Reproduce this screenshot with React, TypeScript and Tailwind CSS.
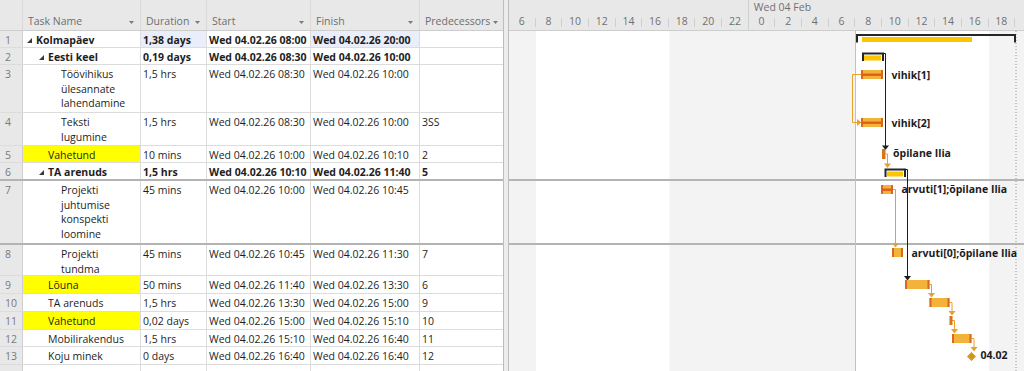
import React from "react";

type Row = {
  n: number | "";
  h: string;
  level: 0 | 1 | 2;
  summary?: boolean;
  name: string[];
  dur: string;
  start: string;
  finish: string;
  pred: string;
  hl?: boolean;
  blue?: boolean;
  thick?: boolean;
};

const D = "Wed 04.02.26 ";

const rows: Row[] = [
  { n: 1, h: "h-[17px]", level: 0, summary: true, name: ["Kolmapäev"], dur: "1,38 days", start: D + "08:00", finish: D + "20:00", pred: "", blue: true },
  { n: 2, h: "h-[17px]", level: 1, summary: true, name: ["Eesti keel"], dur: "0,19 days", start: D + "08:30", finish: D + "10:00", pred: "" },
  { n: 3, h: "h-[48px]", level: 2, name: ["Töövihikus", "ülesannate", "lahendamine"], dur: "1,5 hrs", start: D + "08:30", finish: D + "10:00", pred: "" },
  { n: 4, h: "h-[33px]", level: 2, name: ["Teksti", "lugumine"], dur: "1,5 hrs", start: D + "08:30", finish: D + "10:00", pred: "3SS" },
  { n: 5, h: "h-[17px]", level: 1, hl: true, name: ["Vahetund"], dur: "10 mins", start: D + "10:00", finish: D + "10:10", pred: "2" },
  { n: 6, h: "h-[18px]", level: 1, summary: true, thick: true, name: ["TA arenuds"], dur: "1,5 hrs", start: D + "10:10", finish: D + "11:40", pred: "5" },
  { n: 7, h: "h-[64px]", level: 2, thick: true, name: ["Projekti", "juhtumise", "konspekti", "loomine"], dur: "45 mins", start: D + "10:00", finish: D + "10:45", pred: "" },
  { n: 8, h: "h-[31px]", level: 2, name: ["Projekti", "tundma"], dur: "45 mins", start: D + "10:45", finish: D + "11:30", pred: "7" },
  { n: 9, h: "h-[18px]", level: 1, hl: true, name: ["Lõuna"], dur: "50 mins", start: D + "11:40", finish: D + "13:30", pred: "6" },
  { n: 10, h: "h-[18px]", level: 1, name: ["TA arenuds"], dur: "1,5 hrs", start: D + "13:30", finish: D + "15:00", pred: "9" },
  { n: 11, h: "h-[18px]", level: 1, hl: true, name: ["Vahetund"], dur: "0,02 days", start: D + "15:00", finish: D + "15:10", pred: "10" },
  { n: 12, h: "h-[17px]", level: 1, name: ["Mobilirakendus"], dur: "1,5 hrs", start: D + "15:10", finish: D + "16:40", pred: "11" },
  { n: 13, h: "h-[18px]", level: 1, name: ["Koju minek"], dur: "0 days", start: D + "16:40", finish: D + "16:40", pred: "12" },
  { n: "", h: "h-[18px]", level: 1, name: [], dur: "", start: "", finish: "", pred: "" },
];

const ticks = ["6", "8", "10", "12", "14", "16", "18", "20", "22", "0", "2", "4", "6", "8", "10", "12", "14", "16", "18", ""];

const Caret = () => (
  <svg width="5" height="3" className="mb-[4px] shrink-0">
    <polygon points="0,0 5,0 2.5,3" fill="#7a7a7a" />
  </svg>
);

const Outline = () => (
  <span className="flex h-[14.5px] items-center">
    <svg width="5" height="5">
      <polygon points="5,0 5,5 0,5" fill="#3a3a3a" />
    </svg>
  </span>
);

function HeadCell({ label, w }: { label: string; w: string }) {
  return (
    <div className={`${w} flex shrink-0 items-end justify-between border-r border-[#d9d9d9] pb-[2px] pl-[5px] pr-[6px]`}>
      <span>{label}</span>
      <Caret />
    </div>
  );
}

function TableRow({ r }: { r: Row }) {
  const indent = r.summary
    ? r.level === 0
      ? "pl-[4px]"
      : "pl-[16px]"
    : r.level === 2
      ? "pl-[38px]"
      : "pl-[25px]";
  const line = r.thick ? "border-b-2 border-[#b4b4b4]" : "border-b border-[#dcdcdc]";
  return (
    <div className={`flex shrink-0 ${r.h} ${line} ${r.summary ? "font-bold" : ""}`}>
      <div className="w-[23px] shrink-0 border-r border-[#cfcfcf] bg-[#e8e8e8] pl-[5px] pt-[2px] font-normal text-[#7a7a7a]">
        {r.n}
      </div>
      <div className={`w-[118px] shrink-0 border-r border-[#dcdcdc] pt-[2px] ${indent} ${r.hl ? "bg-[#ffff00]" : ""}`}>
        {r.summary ? (
          <div className="flex">
            <Outline />
            <span className="ml-[4px] whitespace-nowrap">{r.name[0]}</span>
          </div>
        ) : (
          r.name.map((t, i) => (
            <div key={i} className="whitespace-nowrap">
              {t}
            </div>
          ))
        )}
      </div>
      <div className={`w-[66px] shrink-0 border-r border-[#dcdcdc] pl-[2px] pt-[2px] whitespace-nowrap ${r.blue ? "bg-[#e9eefa]" : ""}`}>
        {r.dur}
      </div>
      <div className="w-[104px] shrink-0 border-r border-[#dcdcdc] pl-[2px] pt-[2px] whitespace-nowrap">{r.start}</div>
      <div className={`w-[109px] shrink-0 border-r border-[#dcdcdc] pl-[2px] pt-[2px] whitespace-nowrap ${r.blue ? "bg-[#e9eefa]" : ""}`}>
        {r.finish}
      </div>
      <div className="w-[83px] shrink-0 pl-[2px] pt-[2px] whitespace-nowrap">{r.pred}</div>
    </div>
  );
}

// bars drawn in page coordinates, the group is shifted to the chart origin
function Bar({ x1, x2, y, stripe }: { x1: number; x2: number; y: number; stripe?: boolean }) {
  return (
    <g>
      <rect x={x1} y={y} width={x2 - x1} height={9} fill="#f3b23a" />
      <rect x={x1} y={y} width={2} height={9} fill="#d9691c" />
      <rect x={x2 - 2} y={y} width={2} height={9} fill="#d9691c" />
      {stripe && <rect x={x1} y={y + 3.5} width={x2 - x1} height={2.5} fill="#e2601c" />}
    </g>
  );
}

function Summary({ x1, x2, y, y1, y2 }: { x1: number; x2: number; y: number; y1: number; y2: number }) {
  return (
    <g>
      <rect x={y1} y={y + 2} width={y2 - y1} height={5} fill="#fdc400" />
      <path d={`M${x1},${y + 7.5} V${y} H${x2} V${y + 7.5}`} stroke="#262626" strokeWidth={2} fill="none" />
    </g>
  );
}

function Link({ d, tx, ty, color }: { d: string; tx: number; ty: number; color: string }) {
  return (
    <g>
      <path d={d} stroke={color} strokeWidth={1} fill="none" />
      <polygon points={`${tx - 3.5},${ty - 4.5} ${tx + 3.5},${ty - 4.5} ${tx},${ty}`} fill={color} />
    </g>
  );
}

const OR = "#e6a12c";

function Chart() {
  return (
    <svg width={515} height={340} className="block">
      <g transform="translate(-509,-31)">
        <rect x={509} y={31} width={515} height={340} fill="#ffffff" />
        <rect x={509} y={31} width={27} height={340} fill="#f3f3f3" />
        <rect x={669.4} y={31} width={186.6} height={340} fill="#f3f3f3" />
        <rect x={989.3} y={31} width={35} height={340} fill="#f3f3f3" />
        <rect x={509} y={179} width={515} height={2} fill="#b4b4b4" />
        <rect x={509} y={243} width={515} height={2} fill="#b4b4b4" />
        <line x1={855.5} y1={31} x2={855.5} y2={371} stroke="#a6d6a0" strokeWidth={1} />
        <line x1={1016} y1={31} x2={1016} y2={371} stroke="#9a9a9a" strokeWidth={1} strokeDasharray="1 2" />

        <Summary x1={857} x2={1015} y={35} y1={862} y2={972} />
        <Summary x1={863} x2={883} y={53.5} y1={864} y2={881} />
        <Summary x1={885.5} x2={905} y={169.5} y1={887} y2={903} />

        <Link d="M883,53.5 H885.5 V146" tx={885.5} ty={150} color="#1e1e1e" />
        <Link d="M905,169.5 H907.5 V276" tx={907.5} ty={280.5} color="#1e1e1e" />

        <path d="M861,74.5 H852.5 V122.5 H857" stroke={OR} strokeWidth={1} fill="none" />
        <polygon points="857,119 857,126 861.5,122.5" fill={OR} />
        <Link d="M885.5,154 H887.5 V164" tx={887.5} ty={168} color={OR} />
        <Link d="M893,189.5 H895.5 V243" tx={895.5} ty={247.5} color={OR} />
        <Link d="M929.5,284.5 H931.5 V293.5" tx={931.5} ty={297.5} color={OR} />
        <Link d="M949.5,302.5 H952 V311.5" tx={952} ty={315.5} color={OR} />
        <Link d="M952,320.5 H954.5 V329.5" tx={954.5} ty={333.5} color={OR} />
        <Link d="M971.5,338.5 H974 V347.5" tx={974} ty={351.5} color={OR} />

        <Bar x1={861} x2={883} y={70} stripe />
        <Bar x1={861} x2={883} y={118} stripe />
        <rect x={882} y={149} width={3.5} height={10} fill="#d9731f" />
        <Bar x1={881} x2={893} y={185} stripe />
        <Bar x1={892} x2={903} y={248} />
        <Bar x1={905} x2={929.5} y={280} />
        <Bar x1={929.5} x2={949.5} y={298} />
        <rect x={949.5} y={316} width={3} height={9} fill="#d9731f" />
        <Bar x1={952} x2={971.5} y={334} />
        <polygon points="971.5,352 976,356.5 971.5,361 967,356.5" fill="#d3961b" />

        <g className="font-['Open_Sans',sans-serif] text-[10.5px] font-bold" fill="#1c1c1c">
          <text x={891.5} y={74.5} dominantBaseline="central">vihik[1]</text>
          <text x={891.5} y={122.5} dominantBaseline="central">vihik[2]</text>
          <text x={893} y={153} dominantBaseline="central">õpilane Ilia</text>
          <text x={901.5} y={189} dominantBaseline="central">arvuti[1];õpilane Ilia</text>
          <text x={911.5} y={252.5} dominantBaseline="central">arvuti[0];õpilane Ilia</text>
          <text x={980.5} y={355} dominantBaseline="central">04.02</text>
        </g>
      </g>
    </svg>
  );
}

export default function App() {
  return (
    <div className="flex h-[371px] w-[1024px] overflow-hidden bg-white font-['Open_Sans',sans-serif] text-[10.5px] leading-[14.5px] text-[#1e1e1e]">
      {/* task table */}
      <div className="flex w-[503px] shrink-0 flex-col">
        <div className="flex h-[31px] shrink-0 border-b border-[#cdcdcd] bg-[#e8e8e8] text-[#6e6e6e]">
          <div className="w-[23px] shrink-0 border-r border-[#d9d9d9]" />
          <HeadCell label="Task Name" w="w-[118px]" />
          <HeadCell label="Duration" w="w-[66px]" />
          <HeadCell label="Start" w="w-[104px]" />
          <HeadCell label="Finish" w="w-[109px]" />
          <div className="flex w-[83px] shrink-0 items-end justify-between pb-[2px] pl-[5px] pr-[5px]">
            <span>Predecessors</span>
            <Caret />
          </div>
        </div>
        {rows.map((r, i) => (
          <TableRow key={i} r={r} />
        ))}
      </div>

      {/* splitter */}
      <div className="w-[6px] shrink-0 border-x border-[#bdbdbd] bg-[#ececec]" />

      {/* gantt */}
      <div className="flex w-[515px] shrink-0 flex-col">
        <div className="h-[31px] shrink-0 border-b border-[#cdcdcd] bg-[#e8e8e8] text-[#707070]">
          <div className="flex h-[15px]">
            <div className="h-full w-[239.85px] shrink-0 border-r border-[#cfcfcf]" />
            <div className="pl-[5px] leading-[15px] whitespace-nowrap">Wed 04 Feb</div>
          </div>
          <div className="flex h-[15px]">
            {ticks.map((t, i) => (
              <div key={i} className="flex shrink-0">
                <div className="w-[25.65px] shrink-0 text-center leading-[12px]">{t}</div>
                <div className={`w-px shrink-0 bg-[#cfcfcf] ${i === 8 ? "h-[15px]" : "mt-[3px] h-[9px]"}`} />
              </div>
            ))}
          </div>
        </div>
        <Chart />
      </div>
    </div>
  );
}
